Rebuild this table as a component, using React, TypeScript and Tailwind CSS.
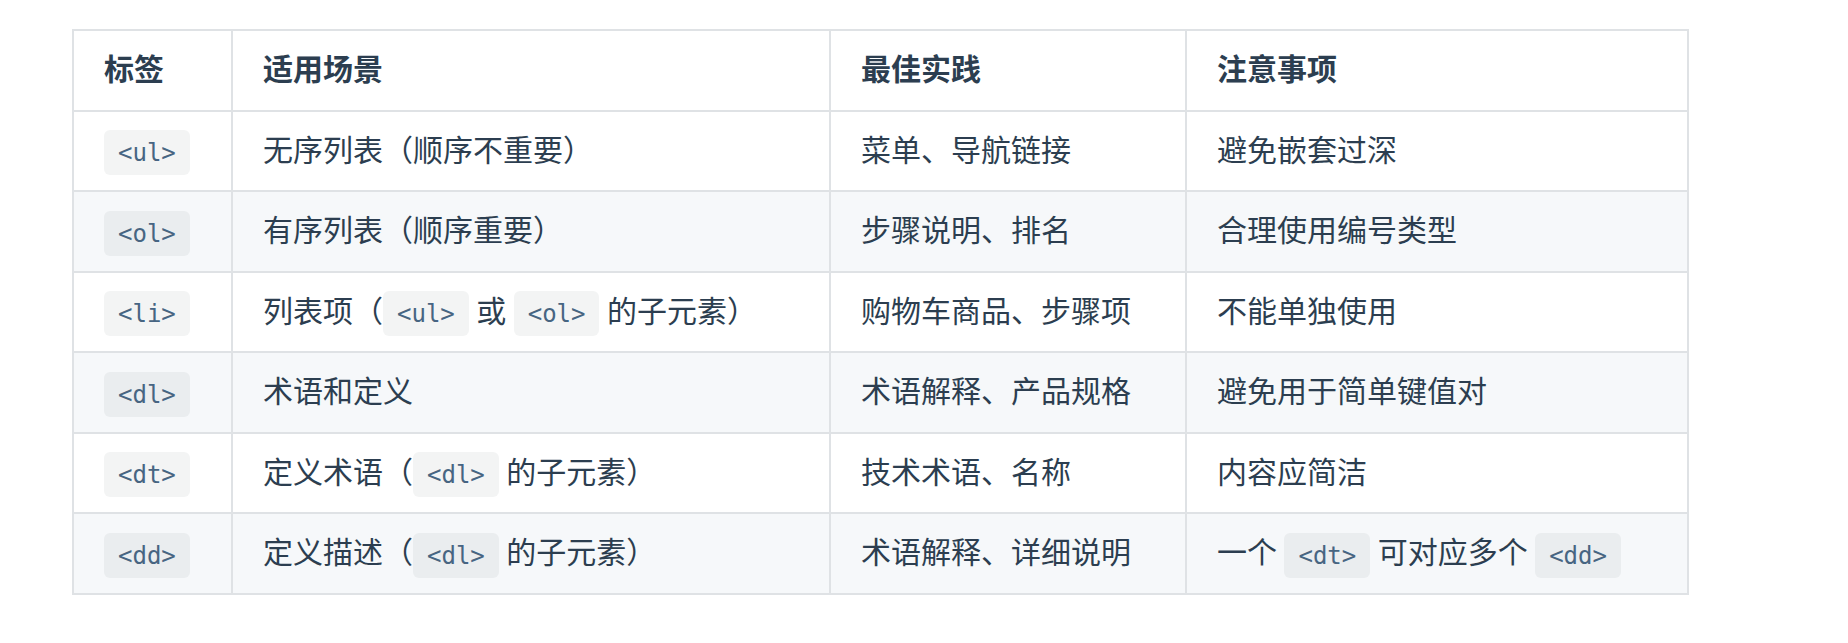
import type { ReactNode } from "react";

type Seg = string | { code: string };

type Row = {
  tag: string;
  scene: Seg[];
  practice: string;
  note: Seg[];
};

const rows: Row[] = [
  { tag: "<ul>", scene: ["无序列表（顺序不重要）"], practice: "菜单、导航链接", note: ["避免嵌套过深"] },
  { tag: "<ol>", scene: ["有序列表（顺序重要）"], practice: "步骤说明、排名", note: ["合理使用编号类型"] },
  {
    tag: "<li>",
    scene: ["列表项（", { code: "<ul>" }, " 或 ", { code: "<ol>" }, " 的子元素）"],
    practice: "购物车商品、步骤项",
    note: ["不能单独使用"],
  },
  { tag: "<dl>", scene: ["术语和定义"], practice: "术语解释、产品规格", note: ["避免用于简单键值对"] },
  {
    tag: "<dt>",
    scene: ["定义术语（", { code: "<dl>" }, " 的子元素）"],
    practice: "技术术语、名称",
    note: ["内容应简洁"],
  },
  {
    tag: "<dd>",
    scene: ["定义描述（", { code: "<dl>" }, " 的子元素）"],
    practice: "术语解释、详细说明",
    note: ["一个 ", { code: "<dt>" }, " 可对应多个 ", { code: "<dd>" }],
  },
];

function Code({ children }: { children: ReactNode }) {
  return (
    <code className="rounded-[6px] bg-[rgba(27,31,35,0.05)] px-[14px] py-[8.5px] font-['DejaVu_Sans_Mono',monospace] text-[24px] leading-none text-[#476582]">
      {children}
    </code>
  );
}

function Segments({ segs }: { segs: Seg[] }) {
  return (
    <>
      {segs.map((s, i) => (typeof s === "string" ? <span key={i}>{s}</span> : <Code key={i}>{s.code}</Code>))}
    </>
  );
}

const cell = "border-2 border-[#dfe2e5] px-[30px] py-[18px] text-left align-middle";

export default function App() {
  return (
    <div className="min-h-screen bg-white pt-[29px] pl-[72px]">
      <table className="w-[1617px] table-fixed border-collapse font-['Roboto','Noto_Sans_CJK_SC',sans-serif] text-[30px] leading-[42.5px] text-[#2c3e50]">
        <colgroup>
          <col className="w-[159px]" />
          <col className="w-[598px]" />
          <col className="w-[356px]" />
          <col className="w-[502px]" />
        </colgroup>
        <thead>
          <tr className="bg-white">
            <th className={`${cell} font-bold`}>标签</th>
            <th className={`${cell} font-bold`}>适用场景</th>
            <th className={`${cell} font-bold`}>最佳实践</th>
            <th className={`${cell} font-bold`}>注意事项</th>
          </tr>
        </thead>
        <tbody>
          {rows.map((r, i) => (
            <tr key={r.tag} className={i % 2 === 1 ? "bg-[#f6f8fa]" : "bg-white"}>
              <td className={cell}>
                <Code>{r.tag}</Code>
              </td>
              <td className={cell}>
                <Segments segs={r.scene} />
              </td>
              <td className={cell}>{r.practice}</td>
              <td className={cell}>
                <Segments segs={r.note} />
              </td>
            </tr>
          ))}
        </tbody>
      </table>
    </div>
  );
}
